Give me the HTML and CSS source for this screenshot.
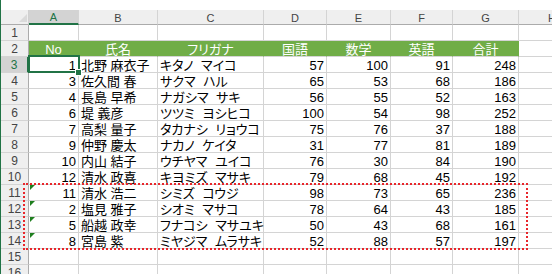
FILE: index.html
```html
<!DOCTYPE html>
<html lang="ja">
<head>
<meta charset="utf-8">
<title>Sheet</title>
<link rel="stylesheet" href="styles.css">
</head>
<body>
<div class="app">
  <div class="topstrip"></div>
  <div class="sheet">
    <div class="corner"><span class="tri"></span></div>
    <div class="colhdr sel">A</div>
    <div class="colhdr">B</div>
    <div class="colhdr">C</div>
    <div class="colhdr">D</div>
    <div class="colhdr">E</div>
    <div class="colhdr">F</div>
    <div class="colhdr">G</div>
    <div class="colhdr last">H</div>

    <div class="rowhdr">1</div>
    <div class="c"></div><div class="c"></div><div class="c"></div><div class="c"></div><div class="c"></div><div class="c"></div><div class="c"></div><div class="c"></div>

    <div class="rowhdr">2</div>
    <div class="c h">No</div><div class="c h">氏名</div><div class="c h">フリガナ</div><div class="c h">国語</div><div class="c h">数学</div><div class="c h">英語</div><div class="c h">合計</div><div class="c"></div>

    <div class="rowhdr sel">3</div>
    <div class="c n active">1</div><div class="c t">北野 麻衣子</div><div class="c t f">キタノ マイコ</div><div class="c n">57</div><div class="c n">100</div><div class="c n">91</div><div class="c n">248</div><div class="c"></div>

    <div class="rowhdr">4</div>
    <div class="c n">3</div><div class="c t">佐久間 春</div><div class="c t f">サクマ ハル</div><div class="c n">65</div><div class="c n">53</div><div class="c n">68</div><div class="c n">186</div><div class="c"></div>

    <div class="rowhdr">5</div>
    <div class="c n">4</div><div class="c t">長島 早希</div><div class="c t f">ナガシマ サキ</div><div class="c n">56</div><div class="c n">55</div><div class="c n">52</div><div class="c n">163</div><div class="c"></div>

    <div class="rowhdr">6</div>
    <div class="c n">6</div><div class="c t">堤 義彦</div><div class="c t f">ツツミ ヨシヒコ</div><div class="c n">100</div><div class="c n">54</div><div class="c n">98</div><div class="c n">252</div><div class="c"></div>

    <div class="rowhdr">7</div>
    <div class="c n">7</div><div class="c t">高梨 量子</div><div class="c t f">タカナシ リョウコ</div><div class="c n">75</div><div class="c n">76</div><div class="c n">37</div><div class="c n">188</div><div class="c"></div>

    <div class="rowhdr">8</div>
    <div class="c n">9</div><div class="c t">仲野 慶太</div><div class="c t f">ナカノ ケイタ</div><div class="c n">31</div><div class="c n">77</div><div class="c n">81</div><div class="c n">189</div><div class="c"></div>

    <div class="rowhdr">9</div>
    <div class="c n">10</div><div class="c t">内山 結子</div><div class="c t f">ウチヤマ ユイコ</div><div class="c n">76</div><div class="c n">30</div><div class="c n">84</div><div class="c n">190</div><div class="c"></div>

    <div class="rowhdr">10</div>
    <div class="c n">12</div><div class="c t">清水 政喜</div><div class="c t f">キヨミズ マサキ</div><div class="c n">79</div><div class="c n">68</div><div class="c n">45</div><div class="c n">192</div><div class="c"></div>

    <div class="rowhdr">11</div>
    <div class="c n err">11</div><div class="c t">清水 浩二</div><div class="c t f">シミズ コウジ</div><div class="c n">98</div><div class="c n">73</div><div class="c n">65</div><div class="c n">236</div><div class="c"></div>

    <div class="rowhdr">12</div>
    <div class="c n err">2</div><div class="c t">塩見 雅子</div><div class="c t f">シオミ マサコ</div><div class="c n">78</div><div class="c n">64</div><div class="c n">43</div><div class="c n">185</div><div class="c"></div>

    <div class="rowhdr">13</div>
    <div class="c n err">5</div><div class="c t">船越 政幸</div><div class="c t f">フナコシ マサユキ</div><div class="c n">50</div><div class="c n">43</div><div class="c n">68</div><div class="c n">161</div><div class="c"></div>

    <div class="rowhdr">14</div>
    <div class="c n err">8</div><div class="c t">宮島 紫</div><div class="c t f">ミヤジマ ムラサキ</div><div class="c n">52</div><div class="c n">88</div><div class="c n">57</div><div class="c n">197</div><div class="c"></div>

    <div class="rowhdr">15</div>
    <div class="c"></div><div class="c"></div><div class="c"></div><div class="c"></div><div class="c"></div><div class="c"></div><div class="c"></div><div class="c"></div>

    <div class="rowhdr">16</div>
    <div class="c"></div><div class="c"></div><div class="c"></div><div class="c"></div><div class="c"></div><div class="c"></div><div class="c"></div><div class="c"></div>
  </div>
  <div class="marquee"></div>
</div>
</body>
</html>
```
FILE: styles.css
```css
html, body {
  margin: 0;
  padding: 0;
  background: #ffffff;
  overflow: hidden;
}

.app {
  position: relative;
  width: 552px;
  height: 274px;
  overflow: hidden;
  border-left: 1px solid #217346;
  box-sizing: border-box;
  font-family: "Liberation Sans", "Noto Sans CJK JP", sans-serif;
}

.topstrip {
  height: 10px;
  background: #ffffff;
}

.sheet {
  display: grid;
  grid-template-columns: 28px 50px 79px 106px 63px 64px 62px 66px 80px;
  grid-template-rows: 15px repeat(16, 16px);
}

.corner,
.colhdr,
.rowhdr {
  background: #efefef;
  box-sizing: border-box;
  color: #444444;
  font-family: "Liberation Sans", sans-serif;
  font-size: 11px;
  display: flex;
  align-items: center;
  justify-content: center;
}

.corner {
  border-right: 1px solid #d0d0d0;
  border-bottom: 1px solid #ababab;
  position: relative;
}

.corner .tri {
  position: absolute;
  right: 1px;
  bottom: 2px;
  width: 0;
  height: 0;
  border-left: 8px solid transparent;
  border-bottom: 8px solid #dadada;
}

.colhdr {
  border-right: 1px solid #d4d4d4;
  border-bottom: 1px solid #ababab;
  padding-top: 1px;
}

.colhdr.last {
  justify-content: flex-start;
  padding-left: 29px;
}

.colhdr.sel {
  background: #d3d3d3;
  color: #217346;
  border-bottom: 2px solid #217346;
}

.rowhdr {
  border-right: 1px solid #ababab;
  border-bottom: 1px solid #d4d4d4;
  font-size: 12px;
  padding-top: 1px;
}

.rowhdr.sel {
  background: #d3d3d3;
  color: #217346;
  border-right: 2px solid #217346;
}

.c {
  box-sizing: border-box;
  border-right: 1px solid #d4d4d4;
  border-bottom: 1px solid #d4d4d4;
  font-size: 13px;
  font-feature-settings: "palt";
  color: #000000;
  line-height: 15px;
  white-space: nowrap;
  overflow: visible;
  position: relative;
  padding: 1px 2px 0 2px;
}

.c.n {
  text-align: right;
}

.c.t {
  text-align: left;
}

.c.f {
  word-spacing: 4px;
}

.c.h {
  background: #70ad47;
  color: #ffffff;
  text-align: center;
  border-right-color: #70ad47;
}

.c.active::after {
  content: "";
  position: absolute;
  left: -1px;
  top: -2px;
  right: -2px;
  bottom: -1px;
  border: 2px solid #217346;
}

.c.active::before {
  content: "";
  position: absolute;
  right: -4px;
  bottom: -4px;
  width: 5px;
  height: 5px;
  background: #217346;
  border: 1px solid #ffffff;
  z-index: 2;
}

.c.err::before {
  content: "";
  position: absolute;
  left: 1px;
  top: 0;
  width: 0;
  height: 0;
  border-top: 5px solid #1f7f1f;
  border-right: 5px solid transparent;
}

.marquee {
  position: absolute;
  left: 22px;
  top: 183px;
  width: 505px;
  height: 67px;
  box-sizing: border-box;
  border: 2px dotted #e8262b;
}
```
